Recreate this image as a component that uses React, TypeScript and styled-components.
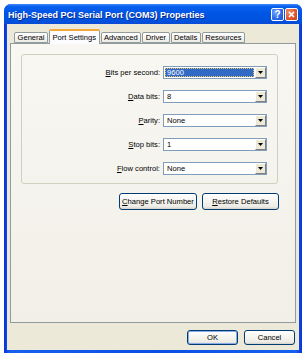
import styled, { createGlobalStyle } from 'styled-components'

const GlobalStyle = createGlobalStyle`
  html, body {
    margin: 0;
    padding: 0;
    background: #ffffff;
  }
  body {
    font-family: "Liberation Sans", Arial, sans-serif;
    font-size: 7.6px;
    color: #000;
  }
`

const Page = styled.div`
  width: 308px;
  height: 357px;
  padding: 4px 0 0 4px;
  box-sizing: border-box;
`

const Window = styled.div`
  width: 298px;
  height: 349px;
  display: flex;
  flex-direction: column;
  border-radius: 7px 7px 0 0;
  overflow: hidden;
  background: linear-gradient(to right, #0831d9, #1660f0 2%, #0a4ee4 50%, #1660f0 98%, #0831d9);
`

const TitleBar = styled.div`
  height: 20px;
  flex: none;
  display: flex;
  align-items: center;
  padding: 1px 4px 0;
  box-sizing: border-box;
  background: linear-gradient(to bottom, #3b8dff 0%, #0b61ee 12%, #0055e5 45%, #0053e0 80%, #0a4ad3 100%);
`

const Title = styled.div`
  flex: 1;
  color: #fff;
  font-weight: bold;
  font-size: 9px;
  text-shadow: 1px 1px 0 #0a2a8a;
  white-space: nowrap;
`

const CaptionButton = styled.div<{ $close?: boolean }>`
  width: 13px;
  height: 13px;
  margin-left: 1px;
  box-sizing: border-box;
  border: 1px solid #fff;
  border-radius: 2px;
  display: flex;
  align-items: center;
  justify-content: center;
  color: #fff;
  font-weight: bold;
  font-size: 10px;
  background: ${(p) =>
    p.$close
      ? 'radial-gradient(circle at 30% 30%, #f0906c, #e0552b 60%, #c7401a)'
      : 'radial-gradient(circle at 30% 30%, #6ea1ff, #2b67e6 60%, #1b4fd0)'};
`

const Frame = styled.div`
  flex: 1;
  display: flex;
  flex-direction: column;
  margin: 0 3px 3px;
  padding: 5px 3px 5px;
  background: #ece9d8;
`

const TabStrip = styled.div`
  height: 14px;
  flex: none;
  display: flex;
  align-items: flex-end;
  padding-left: 4px;
  position: relative;
  z-index: 1;
`

const Tab = styled.div<{ $active?: boolean }>`
  height: ${(p) => (p.$active ? '15px' : '11px')};
  margin-bottom: ${(p) => (p.$active ? '-1px' : '0')};
  margin-right: 1px;
  box-sizing: border-box;
  padding: 0 2.5px;
  display: flex;
  align-items: center;
  border: 1px solid #919b9c;
  border-bottom: ${(p) => (p.$active ? 'none' : '1px solid #919b9c')};
  border-top: ${(p) => (p.$active ? '2px solid #f4a83a' : '1px solid #919b9c')};
  border-radius: 2px 2px 0 0;
  background: ${(p) => (p.$active ? '#fcfcfe' : 'linear-gradient(to bottom, #ffffff, #ecebe5)')};
  white-space: nowrap;
`

const Panel = styled.div`
  flex: 1;
  display: flex;
  flex-direction: column;
  border: 1px solid #919b9c;
  padding: 10px 17px 0 10px;
  background: linear-gradient(to bottom, #f8f7f2, #f1efe7);
`

const GroupBox = styled.div`
  display: grid;
  grid-template-columns: 1fr 104px;
  column-gap: 3px;
  row-gap: 11px;
  align-items: center;
  padding: 11px 10px 8px 0;
  border: 1px solid #d0d0bf;
  border-radius: 3px;
`

const Label = styled.div`
  text-align: right;
  white-space: nowrap;
`

const Combo = styled.div`
  height: 13px;
  box-sizing: border-box;
  border: 1px solid #7f9db9;
  background: #fff;
  display: flex;
  align-items: stretch;
`

const ComboValue = styled.div<{ $selected?: boolean }>`
  flex: 1;
  margin: 1px;
  padding-left: 2px;
  display: flex;
  align-items: center;
  box-sizing: border-box;
  color: ${(p) => (p.$selected ? '#fff' : '#000')};
  background: ${(p) => (p.$selected ? '#316ac5' : 'transparent')};
  outline: ${(p) => (p.$selected ? '1px dotted #f0c060' : 'none')};
  outline-offset: -1px;
`

const DropButton = styled.div`
  width: 11px;
  box-sizing: border-box;
  border: 1px solid;
  border-color: #ffffff #808080 #808080 #ffffff;
  background: #ece9d8;
  display: flex;
  align-items: center;
  justify-content: center;
`

const ButtonRow = styled.div`
  display: flex;
  justify-content: flex-end;
  gap: 5px;
  margin: 9px -1px 0 0;
`

const Footer = styled.div`
  display: flex;
  justify-content: flex-end;
  gap: 6px;
  margin-top: 7px;
  padding-right: 1px;
`

const Button = styled.div<{ $width: number; $height?: number; $default?: boolean }>`
  width: ${(p) => p.$width}px;
  height: ${(p) => p.$height ?? 17}px;
  box-sizing: border-box;
  border: 1px solid #003c74;
  border-radius: 3px;
  background: linear-gradient(to bottom, #ffffff 0%, #f4f3ee 50%, #ecebe6 85%, #d6d0c5 100%);
  box-shadow: ${(p) => (p.$default ? 'inset 0 0 0 1px #89abe9' : 'none')};
  display: flex;
  align-items: center;
  justify-content: center;
  white-space: nowrap;
`

const Arrow = () => (
  <svg width="5" height="3" viewBox="0 0 5 3">
    <path d="M0 0h5L2.5 3z" fill="#000" />
  </svg>
)

const CloseGlyph = () => (
  <svg width="7" height="7" viewBox="0 0 7 7">
    <path d="M1 1l5 5M6 1L1 6" stroke="#fff" strokeWidth="1.6" />
  </svg>
)

const settings = [
  { key: 'B', rest: 'its per second:', value: '9600', selected: true },
  { key: 'D', rest: 'ata bits:', value: '8' },
  { key: 'P', rest: 'arity:', value: 'None' },
  { key: 'S', rest: 'top bits:', value: '1' },
  { key: 'F', rest: 'low control:', value: 'None' },
]

const tabs = ['General', 'Port Settings', 'Advanced', 'Driver', 'Details', 'Resources']

const App = () => {
  return (
    <Page>
      <GlobalStyle />
      <Window>
        <TitleBar>
          <Title>High-Speed PCI Serial Port (COM3) Properties</Title>
          <CaptionButton>?</CaptionButton>
          <CaptionButton $close>
            <CloseGlyph />
          </CaptionButton>
        </TitleBar>
        <Frame>
          <TabStrip>
            {tabs.map((t) => (
              <Tab key={t} $active={t === 'Port Settings'}>
                {t}
              </Tab>
            ))}
          </TabStrip>
          <Panel>
            <GroupBox>
              {settings.flatMap((s) => [
                <Label key={s.key + 'l'}>
                  <u>{s.key}</u>
                  {s.rest}
                </Label>,
                <Combo key={s.key + 'c'}>
                  <ComboValue $selected={s.selected}>{s.value}</ComboValue>
                  <DropButton>
                    <Arrow />
                  </DropButton>
                </Combo>,
              ])}
            </GroupBox>
            <ButtonRow>
              <Button $width={78}>
                <u>C</u>hange Port Number
              </Button>
              <Button $width={77}>
                <u>R</u>estore Defaults
              </Button>
            </ButtonRow>
          </Panel>
          <Footer>
            <Button $width={51} $height={15} $default>
              OK
            </Button>
            <Button $width={51} $height={15}>
              Cancel
            </Button>
          </Footer>
        </Frame>
      </Window>
    </Page>
  )
}

export default App
